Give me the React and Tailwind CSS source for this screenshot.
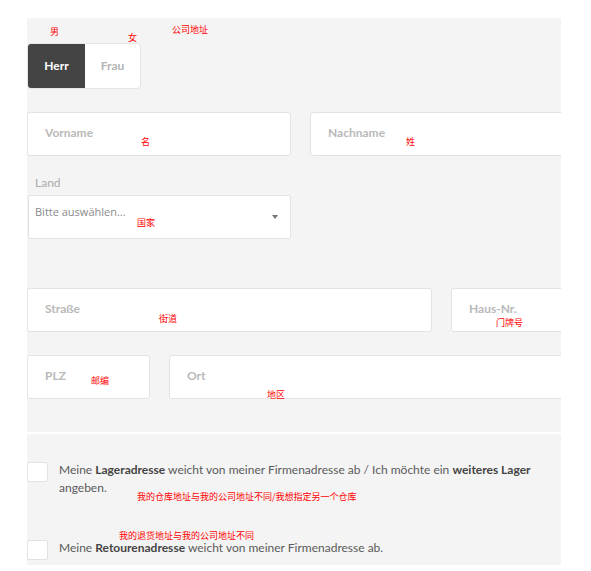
import React from 'react';

const note = "absolute text-[9px] leading-[10px] text-[#ff0000] whitespace-nowrap";
const notes = [
  { t: '男', x: 50, y: 27 },
  { t: '女', x: 128, y: 33 },
  { t: '公司地址', x: 172, y: 25 },
  { t: '名', x: 141, y: 137 },
  { t: '姓', x: 406, y: 137 },
  { t: '国家', x: 137, y: 218 },
  { t: '街道', x: 159, y: 314 },
  { t: '门牌号', x: 496, y: 318 },
  { t: '邮编', x: 91, y: 376 },
  { t: '地区', x: 267, y: 390 },
  { t: '我的仓库地址与我的公司地址不同/我想指定另一个仓库', x: 137, y: 492 },
  { t: '我的退货地址与我的公司地址不同', x: 119, y: 531 },
];

const Field = ({ label, className }) => (
  <div className={`h-[44px] shrink-0 bg-white border border-[#e3e3e3] rounded-[3px] pl-[17px] pt-[11px] text-[12px] font-bold text-[#b9b9b9] ${className}`}>
    {label}
  </div>
);

const Check = ({ children, className }) => (
  <div className={`flex items-start gap-[11px] ${className}`}>
    <div className="w-[21px] h-[20px] shrink-0 mt-[1px] bg-white border border-[#e2e2e2] rounded-[2px]" />
    <p className="w-[476px] text-[12px] leading-[18px] text-[#5a5a5a]">{children}</p>
  </div>
);

export default function App() {
  return (
    <div className="relative w-[591px] h-[571px] bg-white overflow-hidden" style={{ fontFamily: 'Lato, "Open Sans", sans-serif' }}>
      <div className="ml-[27px] w-[534px] pt-[18px]">
        <section className="bg-[#f4f4f4] h-[414px] overflow-hidden pt-[25px]">
          <div className="flex w-[114px] h-[46px] rounded-[4px] overflow-hidden border border-[#e5e5e5] bg-white text-[12px] font-bold">
            <div className="w-[57px] bg-[#444444] text-white flex items-center justify-center pb-px">Herr</div>
            <div className="flex-1 text-[#b4b4b4] flex items-center justify-center pb-px">Frau</div>
          </div>

          <div className="flex gap-[19px] mt-[23px]">
            <Field label="Vorname" className="w-[264px]" />
            <Field label="Nachname" className="w-[264px]" />
          </div>

          <div className="mt-[20px] ml-[8px] text-[12px] leading-[14px] text-[#ababab]">Land</div>
          <div className="mt-[5px] ml-px w-[263px] h-[44px] bg-white border border-[#e3e3e3] rounded-[2px] flex items-center justify-between pl-[6px] pr-[12px]">
            <span className="text-[11px] text-[#8a8a8a] -mt-[9px]" style={{ fontFamily: '"Open Sans", sans-serif' }}>Bitte auswählen...</span>
            <span className="w-0 h-0 border-l-[3.5px] border-r-[3.5px] border-t-[4px] border-l-transparent border-r-transparent border-t-[#777]" />
          </div>

          <div className="flex gap-[19px] mt-[49px]">
            <Field label="Straße" className="w-[405px]" />
            <Field label="Haus-Nr." className="w-[160px]" />
          </div>

          <div className="flex gap-[19px] mt-[23px]">
            <Field label="PLZ" className="w-[123px]" />
            <Field label="Ort" className="w-[420px]" />
          </div>
        </section>

        <section className="mt-[2px] bg-[#f4f4f4] h-[131px] pt-[27px]">
          <Check>
            Meine <b className="text-[#444]">Lageradresse</b> weicht von meiner Firmenadresse ab / Ich möchte ein <b className="text-[#444]">weiteres Lager</b> angeben.
          </Check>
          <Check className="mt-[42px]">
            Meine <b className="text-[#444]">Retourenadresse</b> weicht von meiner Firmenadresse ab.
          </Check>
        </section>
      </div>

      {notes.map((n) => (
        <span key={n.t} className={note} style={{ left: n.x, top: n.y, fontFamily: '"Noto Sans CJK SC", sans-serif' }}>{n.t}</span>
      ))}
    </div>
  );
}
